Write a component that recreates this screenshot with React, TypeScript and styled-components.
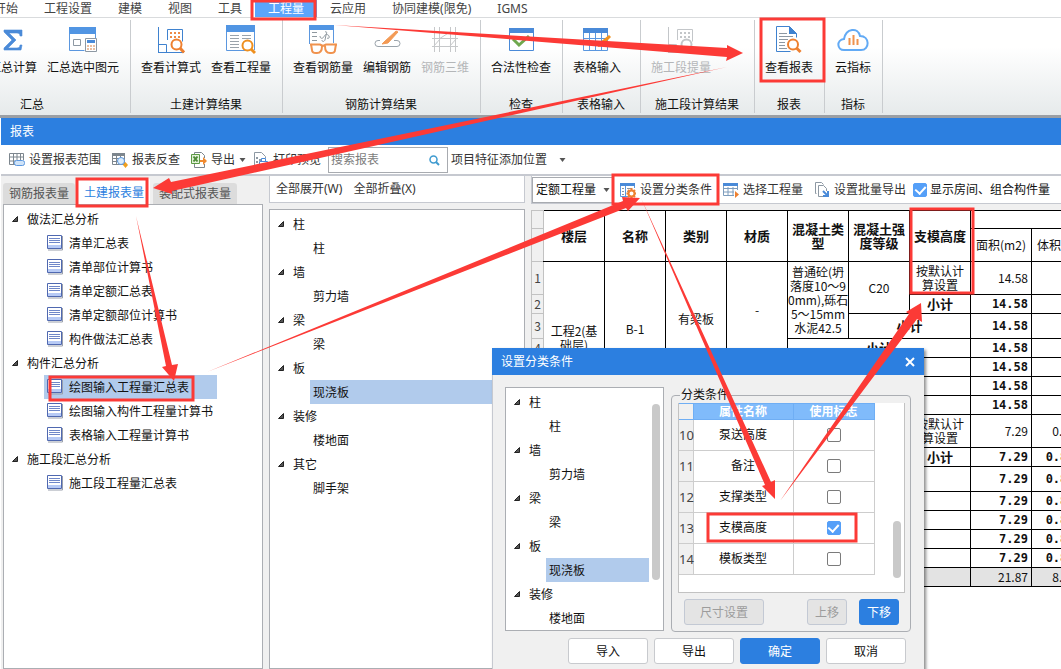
import React from "react";
import styled, { createGlobalStyle, css } from "styled-components";

const BLUE = "#2c7fe0";
const RED = "#fc3a36";

const GlobalStyle = createGlobalStyle`
  * { box-sizing: border-box; }
  body {
    margin: 0;
    overflow: hidden;
    background: #fff;
    color: #111;
    font: 12px/16px "Noto Sans", "Noto Sans CJK SC", sans-serif;
  }
  button, input, select { font: inherit; color: inherit; margin: 0; }
  ul { list-style: none; margin: 0; padding: 0; }
`;

const Page = styled.div`
  position: relative;
  display: flex;
  flex-direction: column;
  min-height: 100vh;
  overflow: hidden;
  white-space: nowrap;
`;

/* ---------- Menu and ribbon ---------- */

const Menu = styled.nav`
  display: flex;
  height: 18px;
  margin-left: -19px;
  border-bottom: 1px solid #d9dbdd;
`;

const MenuItem = styled.button<{ $active?: boolean }>`
  height: 17px;
  padding: 0 13px;
  border: 0;
  background: ${(p) => (p.$active ? "#5ba5fb" : "transparent")};
  color: ${(p) => (p.$active ? "#fff" : "#444")};
`;

const Ribbon = styled.div`
  display: flex;
  height: 100px;
  padding-top: 2px;
  border-bottom: 3px solid #9b9fa4;
  background: linear-gradient(#fff 30%, #e6eaeb);
`;

const Group = styled.section<{ $width: number; $cut?: boolean }>`
  display: flex;
  flex: none;
  flex-direction: column;
  justify-content: space-between;
  width: ${(p) => p.$width}px;
  height: 93px;
  padding: 4px 6px 0 5px;
  border-right: 1px solid #c9cccf;
  ${(p) =>
    p.$cut &&
    css`
      margin-left: -65px;
      align-items: flex-end;
    `}
`;

const GroupButtons = styled.div`
  display: flex;
`;

const GroupName = styled.div`
  align-self: stretch;
  text-align: center;
`;

const RibbonButton = styled.button`
  display: flex;
  flex-direction: column;
  align-items: center;
  gap: 4px;
  padding: 0 5px;
  border: 0;
  background: none;
  color: #111;
  &:disabled { color: #b4b6b8; }
  svg { display: block; }
`;

/* ---------- Report window ---------- */

const Report = styled.main`
  display: flex;
  flex: 1;
  flex-direction: column;
  margin-left: 1px;
  background: #f0f0f0;
`;

const TitleBar = styled.header`
  display: flex;
  align-items: center;
  justify-content: space-between;
  height: 27px;
  padding: 1px 9px 0;
  background: ${BLUE};
  color: #fff;
`;

const Toolbar = styled.div`
  display: flex;
  align-items: center;
  gap: 3px;
  height: 31px;
  padding: 1px 4px 0;
  border-bottom: 2px solid #c6c9d0;
  background: #fff;
`;

const ToolButton = styled.button<{ $menu?: boolean }>`
  display: flex;
  flex: none;
  align-items: center;
  gap: 4px;
  height: 22px;
  padding: 0 ${(p) => (p.$menu ? 0 : 4)}px 0 4px;
  border: 0;
  background: none;
  color: #333;
`;

const SearchBox = styled.label`
  display: flex;
  align-items: center;
  width: 120px;
  height: 26px;
  padding: 0 7px 0 2px;
  border: 1px solid #a8abb0;
  input {
    flex: 1;
    min-width: 0;
    padding: 0;
    border: 0;
    outline: 0;
    background: none;
  }
  input::placeholder { color: #7c7c7c; opacity: 1; }
`;

const FeatureButton = styled(ToolButton)`
  gap: 12px;
  padding: 0;
`;

const Columns = styled.div`
  display: flex;
  flex: 1;
  gap: 6px;
  padding-left: 2px;
`;

const Column = styled.section<{ $width?: number }>`
  display: flex;
  flex-direction: column;
  ${(p) => (p.$width ? `flex: none; width: ${p.$width}px;` : "flex: 1; min-width: 0;")}
`;

const Tabs = styled.div`
  display: flex;
  align-items: flex-end;
  gap: 3px;
  height: 28px;
`;

const Tab = styled.button<{ $active?: boolean }>`
  height: ${(p) => (p.$active ? 26 : 21)}px;
  padding: ${(p) => (p.$active ? 4 : 1)}px 6px 0;
  border: 0;
  border-radius: 3px 3px 0 0;
  background: ${(p) => (p.$active ? "#fff" : "#dcdcdc")};
  color: ${(p) => (p.$active ? BLUE : "#555")};
`;

const TreeBox = styled.div`
  position: relative;
  flex: 1;
  padding-top: 2px;
  border: 1px solid #abaeb3;
  background: #fff;
`;

const ReportTree = styled(TreeBox)`
  padding-right: 45px;
`;

const Branch = styled.div`
  display: flex;
  align-items: center;
  gap: 9px;
  height: 24px;
  padding-left: 7px;
`;

const Leaf = styled.li<{ $selected?: boolean }>`
  display: flex;
  align-items: center;
  gap: 6px;
  height: 24px;
  margin-left: 40px;
  padding-left: 3px;
  background: ${(p) => (p.$selected ? "#b1cbec" : "transparent")};
`;

const NodeName = styled.span`
  padding-top: 2px;
`;

const PanelBar = styled.div<{ $height: number }>`
  display: flex;
  align-items: center;
  gap: 3px;
  height: ${(p) => p.$height}px;
  margin-bottom: 6px;
  padding: 0 2px;
  border: 1px solid #c6c9d0;
  border-top: 0;
  background: #fff;
`;

const GridBar = styled(PanelBar)`
  padding: 1px 0 0;
  border-right: 0;
`;

const QuantitySelect = styled.label`
  position: relative;
  display: flex;
  align-items: center;
  width: 81px;
  height: 26px;
  select {
    width: 100%;
    height: 100%;
    padding: 0 0 0 3px;
    border: 1px solid #a8abb0;
    border-right: 0;
    appearance: none;
    background: #fff;
  }
  svg { position: absolute; right: 3px; }
`;

const CheckInput = styled.input.attrs({ type: "checkbox" })`
  display: grid;
  flex: none;
  place-content: center;
  width: 14px;
  height: 14px;
  border: 1px solid #7b7b7b;
  border-radius: 2px;
  appearance: none;
  background: #fff;
  &:checked { border-color: #559ff8; background: #559ff8; }
  &:checked::after {
    content: "";
    width: 5px;
    height: 8px;
    margin-bottom: 2px;
    border: solid #fff;
    border-width: 0 2px 2px 0;
    transform: rotate(42deg);
  }
`;

const CheckLabel = styled.label`
  display: flex;
  align-items: center;
  gap: 3px;
`;

/* ---------- Quantity table ---------- */

const Sheet = styled.div`
  flex: 1;
  overflow: hidden;
  background: #fff;
`;

const QuantityTable = styled.table`
  width: 622px;
  table-layout: fixed;
  border-collapse: collapse;
  line-height: 14px;
  font-family: "Noto Sans CJK SC", sans-serif;
  th, td { padding: 0; border: 1px solid #000; text-align: center; }
  thead th { font-size: 13px; }
`;

const Line = styled.tr<{ $height: number; $total?: boolean }>`
  height: ${(p) => p.$height}px;
  background: ${(p) => (p.$total ? "#e3e3e3" : "#fff")};
`;

const RowNo = styled.th`
  && {
    border-color: #c2c2c2;
    background: #f0f0f0;
    color: #444;
    font-size: 12px;
    font-weight: 400;
  }
  && + [rowspan="2"], && + [rowspan="7"] { border-left-color: #c2c2c2; }
`;

const UnitHead = styled.th`
  && { font-size: 12px; font-weight: 400; }
`;

const Value = styled.td<{ $bold?: boolean }>`
  && {
    padding-right: 3px;
    text-align: right;
    font-family: ${(p) => (p.$bold ? '"DejaVu Sans Mono", monospace' : '"Noto Sans CJK SC", sans-serif')};
    font-weight: ${(p) => (p.$bold ? 700 : 400)};
  }
`;

const Subtotal = styled.td`
  font-size: 13px;
  font-weight: 700;
`;

/* ---------- Dialog ---------- */

const Dialog = styled.section`
  position: absolute;
  top: 348px;
  left: 492px;
  width: 432px;
  background: #f0f0f0;
  box-shadow: 2px 2px 3px rgba(0, 0, 0, 0.45);
`;

const CloseButton = styled.button`
  padding: 0;
  border: 0;
  background: none;
  line-height: 0;
`;

const DialogBody = styled.div`
  display: flex;
  gap: 7px;
  padding: 12px 13px 6px 12px;
  border-left: 1px solid #c6c9d0;
`;

const DialogTree = styled(TreeBox)`
  flex: none;
  width: 159px;
  height: 244px;
  padding-right: 14px;
  overflow: hidden;
`;

const Thumb = styled.div<{ $top: number; $height: number; $right: number }>`
  position: absolute;
  top: ${(p) => p.$top}px;
  right: ${(p) => p.$right}px;
  width: 8px;
  height: ${(p) => p.$height}px;
  border-radius: 4px;
  background: #c9c9c9;
`;

const Conditions = styled.fieldset`
  flex: 1;
  min-width: 0;
  margin: 0;
  padding: 0 5px 6px 6px;
  border: 1px solid #abaeb3;
  border-radius: 4px;
  legend { margin-left: 2px; padding: 0 1px; }
`;

const ListBox = styled.div`
  position: relative;
  height: 190px;
  margin-bottom: 6px;
  border: 1px solid #c2c2c2;
  border-top: 0;
  background: #fff;
`;

const ConditionTable = styled.table`
  width: 195px;
  table-layout: fixed;
  border-collapse: collapse;
  th, td { padding: 0; border: 1px solid #cdcdcd; text-align: center; }
  tr > :first-child { border-left: 0; }
  thead th { height: 16px; background: #80bbfb; color: #fff; line-height: 14px; border-color: #6faef4; }
  thead th:first-child { background: #f0f0f0; }
  tbody tr { height: 31px; }
  tbody th { background: #f0f0f0; color: #444; font-size: 13px; font-weight: 400; }
  input { margin: 0 auto; }
`;

const ButtonRow = styled.div`
  display: flex;
  gap: 12px;
  padding: 0 6px;
  & > :first-child { margin-right: auto; }
`;

const DialogFooter = styled.footer`
  display: flex;
  justify-content: flex-end;
  gap: 6px;
  padding: 0 18px 8px 0;
  border-left: 1px solid #c6c9d0;
`;

const PushButton = styled.button<{ $primary?: boolean; $small?: boolean }>`
  width: ${(p) => (p.$small ? 40 : 80)}px;
  height: 26px;
  padding: 1px 0 0;
  border: 1px solid ${(p) => (p.$primary ? BLUE : "#c8cace")};
  border-radius: 3px;
  background: ${(p) => (p.$primary ? BLUE : "#fff")};
  color: ${(p) => (p.$primary ? "#fff" : "#111")};
  &:disabled { border-color: #c3c9d4; background: #e4e4e4; color: #9c9c9c; }
`;

const Markup = styled.svg`
  position: absolute;
  inset: 0;
  pointer-events: none;
`;

/* ---------- Icons ---------- */

type Kids = { children: React.ReactNode };
const Big = ({ children }: Kids) => (
  <svg width="32" height="32" viewBox="0 0 32 32" fill="none" aria-hidden="true">{children}</svg>
);
const Small = ({ children }: Kids) => (
  <svg width="16" height="16" viewBox="0 0 16 16" fill="none" aria-hidden="true">{children}</svg>
);

const SumIcon = () => (
  <Big>
    <path d="M7 6h18v6h-2c0-2-1-3-3-3h-8l7 7-8 8h9c2 0 3-1 3-3h2l-1 5H7v-2l8-8-8-8z" fill="#4a8ad8" stroke="#4a8ad8" strokeWidth=".6" />
  </Big>
);
const SumSelectedIcon = () => (
  <Big>
    <path d="M2.500 9v17.500h15M28.500 9v5" stroke="#5b97df" />
    <path d="M2 3h27v7H2z" fill="#5195e3" />
    <path d="M6.500 15.500h7v6h-7z" stroke="#8d98a3" />
    <path d="M18.500 14.500h11v13h-11z" fill="#fff" stroke="#8d98a3" />
    <path d="M20 16h8v3h-8z" fill="#4a8ad8" />
    <path d="M20 22h2m1 0h2m1 0h2M20 25h2m1 0h2m1 0h2" stroke="#d98045" />
  </Big>
);
const FormulaShape = ({ line, dots, lens }: { line: string; dots: string; lens: string }) => (
  <>
    <path d="M3.500 3v26M3 28.500h26M3.500 20.500h8v8M12.500 16V5.500h15v12" stroke={line} />
    <path d="M15 8h2v2h-2zm4 0h2v2h-2zm4 0h2v2h-2zm-8 4h2v2h-2zm4 0h2v2h-2zm4 0h2v2h-2z" fill={dots} />
    <circle cx="21.500" cy="20.500" r="5" fill="#fff" stroke={lens} strokeWidth="2" />
    <path d="M25 24l4 4.500" stroke={lens} strokeWidth="3" />
  </>
);
const FormulaIcon = () => <Big><FormulaShape line="#3f82cf" dots="#ee8a45" lens="#ee8030" /></Big>;
const SegmentIcon = () => <Big><FormulaShape line="#c3c6c9" dots="#c3c6c9" lens="#c3c6c9" /></Big>;
const QuantityIcon = () => (
  <Big>
    <path d="M1.500 8v18.500h20M29.500 8v18" stroke="#5b97df" />
    <path d="M1 1h29v7H1z" fill="#5195e3" />
    <path d="M5 11.500h9m3 0h9M5 14.500h9m3 0h9M5 17.500h9M5 20.500h9M5 23.500h9" stroke="#9aa3ab" />
    <circle cx="22.500" cy="21.500" r="5" fill="#fff" stroke="#ee8f1e" strokeWidth="2" />
    <path d="M26 25l4 4" stroke="#ee8f1e" strokeWidth="3" />
  </Big>
);
const RebarViewIcon = () => (
  <Big>
    <path d="M2.500 6v14M26.500 6v13" stroke="#5b97df" />
    <path d="M2 1h25v5H2z" fill="#5195e3" />
    <path d="M5 8.500h5M5 12.500h5M5 16.500h5" stroke="#8f989f" />
    <path d="M13 12c0 3 3 3 4 .5S21 10 22 12s-1 3-2 2M18 8c2-1 2 1 1 3l-1 5c-1 2-3 2-3 0" stroke="#8f989f" />
    <path d="M3 20.500h10l3 1.500 3-1.500h11" stroke="#f0924d" strokeWidth="2" />
    <path d="M4 20l1 6c0 2 2 3 4 3h1c3 0 5-2 5-7M29 20l-1 6c0 2-2 3-4 3h-1c-3 0-5-2-5-7" stroke="#f0924d" strokeWidth="2" />
  </Big>
);
const RebarEditIcon = () => (
  <Big>
    <path d="M9 16.500H7a3 3 0 0 0 0 6h19a3 3 0 0 0 0-6h-3" stroke="#9aa3ab" />
    <path d="M13 18l12-11 2 1-10 11-6 1z" fill="#f39a55" stroke="#f39a55" />
  </Big>
);
const Rebar3dIcon = () => (
  <Big>
    <path d="M3 8.500h26M3 14.500h26M3 22.500h26M5.500 3v25M10.500 3v25M21.500 3v25M26.500 3v25M5 22l6-7M10 15l11-7M21 22l6-7" stroke="#c6c8ca" />
  </Big>
);
const CheckIcon = () => (
  <Big>
    <path d="M4.500 8.500h24v18h-24z" stroke="#4a8ad8" />
    <path d="M4 4h25v5H4z" fill="#4a8ad8" />
    <path d="M8 15l6 6 10-9" stroke="#6fa84d" strokeWidth="3" />
  </Big>
);
const TableInputIcon = () => (
  <Big>
    <path d="M2.500 8.500h24v18h-24zM2 14.500h25M2 20.500h25M8.500 9v18M14.500 9v18M20.500 9v18" stroke="#5b97df" />
    <path d="M2 4h25v5H2z" fill="#4a8ad8" />
    <path d="M17 23l1-4 10-8 2 2-9 9z" fill="#f0921e" />
  </Big>
);
const ReportIcon = () => (
  <Big>
    <path d="M3.500 2.500h13l7 7v4M3.500 2.500v25h14" stroke="#3f82cf" />
    <path d="M16 2l8 8h-8z" fill="#3f82cf" />
    <path d="M6 9.500h8M6 12.500h14M6 15.500h9M6 18.500h6M6 21.500h6M6 24.500h8" stroke="#8d98a3" />
    <circle cx="20" cy="20.500" r="5" fill="#fff" stroke="#ee8030" strokeWidth="2" />
    <path d="M23.500 24l4 4" stroke="#ee8030" strokeWidth="3" />
  </Big>
);
const CloudIcon = () => (
  <Big>
    <path d="M7 26c-7 0-8-10 0-11C9 4 21 3 23 12c10 0 10 14 1 14z" stroke="#62aaf5" strokeWidth="2" />
    <path d="M12.500 14v7M16.500 11v10M20.500 15v6" stroke="#f0924d" strokeWidth="2" />
  </Big>
);

const RangeIcon = () => (
  <Small>
    <path d="M.5 1.500h14v11H.5zM0 5h15M0 9h8M4.500 2v10M8 2v7M11.500 2v6" stroke="#7d868e" />
    <path d="M7 8h8v6H7z" fill="#fff" />
    <rect x="5.500" y="8.500" width="10" height="5" rx="2" fill="#cfe3f8" stroke="#5b97df" />
  </Small>
);
const LookupIcon = () => (
  <Small>
    <path d="M.5 3.500h12v9H.5zM0 6.500h12M0 9.500h6M4.500 3v9M8.500 3v3" stroke="#7d868e" />
    <path d="M0 1h13v3H0z" fill="#7d868e" />
    <circle cx="9" cy="9" r="3.500" fill="#dcecfb" stroke="#5b97df" />
    <path d="M13.500 10l2.500 3-2.500 3-2.500-3z" fill="#f0a01e" />
  </Small>
);
const ExportIcon = () => (
  <Small>
    <path d="M3.500 3V.5h7l3 3V6M3.500 12v3.500h10V12" stroke="#7d868e" />
    <path d="M.5 2.500h8v9h-8z" fill="#e3f2da" stroke="#5c9a45" />
    <path d="M2.500 4.500l4 5m0-5l-4 5" stroke="#4d8a38" strokeWidth="2" />
    <path d="M9 8h3V5l4 4-4 4v-3H9z" fill="#f08a30" />
  </Small>
);
const PreviewIcon = () => (
  <Small>
    <path d="M1.500 15V.5h7l4 4V6M1 14.500h4" stroke="#8d98a3" />
    <path d="M3 5h2v2H3zm3 2h2v2H6zM3 9h2v2H3z" fill="#8d98a3" />
    <path d="M8.500 6.500h4v3h-4zM6.500 9.500h8v4h-8z" fill="#fff" stroke="#4a8ad8" />
  </Small>
);
const ClassifyIcon = () => (
  <Small>
    <path d="M.5 3v11.500H8M5.500 4v10M14.500 3v3" stroke="#5b97df" />
    <path d="M0 1h15v3H0z" fill="#4a8ad8" />
    <path d="M2 6.500h2M2 9.500h2M2 12.500h2M7 6.500h4M7 9.500h1" stroke="#8d98a3" />
    <circle cx="11.500" cy="11.500" r="3" fill="#fff" stroke="#ee8030" strokeWidth="2" />
    <path d="M11.500 6v2m0 7v1M6.500 11.500h2m6 0h2M8 8l1 1m5 5l1 1M8 15l1-1m5-5l1-1" stroke="#ee8030" strokeWidth="2" />
  </Small>
);
const PickIcon = () => (
  <Small>
    <path d="M.5 2.500h14v11H.5zM0 6.500h15M0 10h12M5 5v9M10 5v9" stroke="#7d9cbd" />
    <path d="M0 1h15v3H0z" fill="#4a8ad8" />
    <path d="M11 8h5v7h-5z" fill="#fff" />
    <path d="M12 9l4 3.500-4 3.500z" fill="#ee8030" />
  </Small>
);
const BatchIcon = () => (
  <Small>
    <path d="M2.500 11.500h-1V.5h6l2 2" stroke="#8d98a3" />
    <path d="M9 14.500H4.500v-11h5l3 3V9" stroke="#8d98a3" />
    <path d="M9 9l4 4m1-4v5H9" stroke="#4a8ad8" strokeWidth="2" />
  </Small>
);
const SheetIcon = () => (
  <Small>
    <path d="M1 15h14.500V1" stroke="#9aa0ac" />
    <path d="M.5.500h14v13H.5z" fill="#fff" stroke="#4f68b0" />
    <path d="M1 10h13v3H1z" fill="#b7caf5" />
    <path d="M2 3.500h11M2 5.500h11M2 7.500h11" stroke="#6f87c8" />
  </Small>
);
const Caret = () => (
  <svg width="7" height="4" viewBox="0 0 7 4" aria-hidden="true"><path d="M.5 0h6l-3 4z" fill="#555" /></svg>
);
const Expanded = () => (
  <svg width="7" height="7" viewBox="0 0 7 7" aria-hidden="true"><path d="M6.500.5v5h-5z" fill="#555" stroke="#222" /></svg>
);
const SearchIcon = () => (
  <svg width="11" height="11" viewBox="0 0 11 11" fill="none" stroke="#3f9bd0" aria-hidden="true">
    <circle cx="4.500" cy="4.500" r="3.500" strokeWidth="1.500" />
    <path d="M7 7l3 3" strokeWidth="2" />
  </svg>
);
const CloseIcon = () => (
  <svg width="10" height="10" viewBox="0 0 10 10" stroke="#fff" strokeWidth="2" aria-hidden="true"><path d="M1 1l8 8M9 1L1 9" /></svg>
);

/* ---------- Data ---------- */

const menu = ["开始", "工程设置", "建模", "视图", "工具", "工程量", "云应用", "协同建模(限免)", "IGMS"];

type RibbonItem = { text: string; icon: React.ReactNode; disabled?: boolean };
const ribbon: { name: string; width: number; items: RibbonItem[] }[] = [
  { name: "汇总", width: 196, items: [{ text: "汇总计算", icon: <SumIcon /> }, { text: "汇总选中图元", icon: <SumSelectedIcon /> }] },
  { name: "土建计算结果", width: 152, items: [{ text: "查看计算式", icon: <FormulaIcon /> }, { text: "查看工程量", icon: <QuantityIcon /> }] },
  {
    name: "钢筋计算结果",
    width: 198,
    items: [
      { text: "查看钢筋量", icon: <RebarViewIcon /> },
      { text: "编辑钢筋", icon: <RebarEditIcon /> },
      { text: "钢筋三维", icon: <Rebar3dIcon />, disabled: true },
    ],
  },
  { name: "检查", width: 82, items: [{ text: "合法性检查", icon: <CheckIcon /> }] },
  { name: "表格输入", width: 78, items: [{ text: "表格输入", icon: <TableInputIcon /> }] },
  { name: "施工段计算结果", width: 114, items: [{ text: "施工段提量", icon: <SegmentIcon />, disabled: true }] },
  { name: "报表", width: 70, items: [{ text: "查看报表", icon: <ReportIcon /> }] },
  { name: "指标", width: 58, items: [{ text: "云指标", icon: <CloudIcon /> }] },
];

type Node = { name: string; leaves: string[] };
const reports: Node[] = [
  { name: "做法汇总分析", leaves: ["清单汇总表", "清单部位计算书", "清单定额汇总表", "清单定额部位计算书", "构件做法汇总表"] },
  { name: "构件汇总分析", leaves: ["绘图输入工程量汇总表", "绘图输入构件工程量计算书", "表格输入工程量计算书"] },
  { name: "施工段汇总分析", leaves: ["施工段工程量汇总表"] },
];
const components: Node[] = [
  { name: "柱", leaves: ["柱"] },
  { name: "墙", leaves: ["剪力墙"] },
  { name: "梁", leaves: ["梁"] },
  { name: "板", leaves: ["现浇板"] },
  { name: "装修", leaves: ["楼地面"] },
  { name: "其它", leaves: ["脚手架"] },
];

const conditions = [
  { no: 10, name: "泵送高度" },
  { no: 11, name: "备注" },
  { no: 12, name: "支撑类型" },
  { no: 13, name: "支模高度", used: true },
  { no: 14, name: "模板类型" },
];

const rowHeights = [33, 19, 25, 19, 19, 19, 19];

const Tree = ({ nodes, selected, icon }: { nodes: Node[]; selected: string; icon?: boolean }) => (
  <ul>
    {nodes.map((n) => (
      <li key={n.name}>
        <Branch><Expanded /><NodeName>{n.name}</NodeName></Branch>
        <ul>
          {n.leaves.map((leaf) => (
            <Leaf key={leaf} $selected={leaf === selected}>
              {icon && <SheetIcon />}
              <NodeName>{leaf}</NodeName>
            </Leaf>
          ))}
        </ul>
      </li>
    ))}
  </ul>
);

const FloorRows = ({ start, area, volume }: { start: number; area: string; volume: string }) => (
  <>
    {rowHeights.map((h, i) => (
      <Line key={i} $height={h}>
        <RowNo scope="row">{start + i}</RowNo>
        {i === 0 && (
          <>
            <td rowSpan={7}>工程2(基<br />础层)</td>
            <td rowSpan={6}>B-1</td>
            <td rowSpan={5}>有梁板</td>
            <td rowSpan={4}>-</td>
            <td rowSpan={3}>普通砼(坍<br />落度10～9<br />0mm),砾石<br />5～15mm<br />水泥42.5</td>
            <td rowSpan={2}>C20</td>
            <td>按默认计<br />算设置</td>
          </>
        )}
        {i > 0 && <Subtotal colSpan={i}>小计</Subtotal>}
        <Value $bold={i > 0}>{area}</Value>
        <Value $bold={i > 0}>{volume}</Value>
      </Line>
    ))}
  </>
);

const boxes = [
  [252, 1, 63, 18],
  [761, 19, 63, 62],
  [77, 179, 70, 27],
  [613, 175, 105, 29],
  [911, 209, 62, 84],
  [50, 377, 143, 23],
  [708, 514, 148, 27],
];
const arrows = [
  "334,25 727,48 727,45 743,53 726,61 727,57",
  "727,67 171,182 169,178 153,188 172,194 172,191",
  "136,216 172,365 178,364 174,381 162,367 166,366",
  "207,372 623,201 622,197 640,198 628,211 626,208",
  "641,198 771,482 775,480 775,499 762,486 765,485",
  "780,501 909,314 906,312 921,303 922,322 917,319",
];

export default function App() {
  return (
    <Page>
      <GlobalStyle />
      <Menu>
        {menu.map((m) => <MenuItem key={m} $active={m === "工程量"}>{m}</MenuItem>)}
      </Menu>
      <Ribbon>
        {ribbon.map((g, i) => (
          <Group key={g.name} $width={g.width} $cut={i === 0}>
            <GroupButtons>
              {g.items.map((item) => (
                <RibbonButton key={item.text} disabled={item.disabled}>{item.icon}{item.text}</RibbonButton>
              ))}
            </GroupButtons>
            <GroupName>{g.name}</GroupName>
          </Group>
        ))}
      </Ribbon>

      <Report>
        <TitleBar>报表</TitleBar>
        <Toolbar>
          <ToolButton><RangeIcon />设置报表范围</ToolButton>
          <ToolButton><LookupIcon />报表反查</ToolButton>
          <ToolButton $menu><ExportIcon />导出<Caret /></ToolButton>
          <ToolButton><PreviewIcon />打印预览</ToolButton>
          <SearchBox>
            <input type="text" placeholder="搜索报表" aria-label="搜索报表" />
            <SearchIcon />
          </SearchBox>
          <FeatureButton>项目特征添加位置<Caret /></FeatureButton>
        </Toolbar>

        <Columns>
          <Column $width={260}>
            <Tabs>
              <Tab>钢筋报表量</Tab>
              <Tab $active>土建报表量</Tab>
              <Tab>装配式报表量</Tab>
            </Tabs>
            <ReportTree><Tree nodes={reports} selected="绘图输入工程量汇总表" icon /></ReportTree>
          </Column>

          <Column $width={256}>
            <PanelBar $height={27}>
              <ToolButton>全部展开(W)</ToolButton>
              <ToolButton>全部折叠(X)</ToolButton>
            </PanelBar>
            <TreeBox><Tree nodes={components} selected="现浇板" /></TreeBox>
          </Column>

          <Column>
            <GridBar $height={28}>
              <QuantitySelect>
                <select aria-label="工程量类型"><option>定额工程量</option></select>
                <Caret />
              </QuantitySelect>
              <ToolButton><ClassifyIcon />设置分类条件</ToolButton>
              <ToolButton><PickIcon />选择工程量</ToolButton>
              <ToolButton><BatchIcon />设置批量导出</ToolButton>
              <CheckLabel><CheckInput defaultChecked />显示房间、组合构件量</CheckLabel>
            </GridBar>
            <Sheet>
              <QuantityTable>
                <colgroup>
                  <col width="12" />
                  {Array.from({ length: 10 }, (_, i) => <col key={i} width="61" />)}
                </colgroup>
                <thead>
                  <Line $height={18}>
                    <RowNo />
                    <th rowSpan={2}>楼层</th>
                    <th rowSpan={2}>名称</th>
                    <th rowSpan={2}>类别</th>
                    <th rowSpan={2}>材质</th>
                    <th rowSpan={2}>混凝土类<br />型</th>
                    <th rowSpan={2}>混凝土强<br />度等级</th>
                    <th rowSpan={2}>支模高度</th>
                    <th colSpan={3} />
                  </Line>
                  <Line $height={33}>
                    <RowNo />
                    <UnitHead>面积(m2)</UnitHead>
                    <UnitHead>体积(m3)</UnitHead>
                  </Line>
                </thead>
                <tbody>
                  <FloorRows start={1} area="14.58" volume="" />
                  <FloorRows start={8} area="7.29" volume="0.8748" />
                  <Line $height={19} $total>
                    <RowNo scope="row">15</RowNo>
                    <td colSpan={7}>合计</td>
                    <Value>21.87</Value>
                    <Value>8.7480</Value>
                  </Line>
                </tbody>
              </QuantityTable>
            </Sheet>
          </Column>
        </Columns>
      </Report>

      <Dialog role="dialog" aria-label="设置分类条件">
        <TitleBar>
          设置分类条件
          <CloseButton aria-label="关闭"><CloseIcon /></CloseButton>
        </TitleBar>
        <DialogBody>
          <DialogTree>
            <Tree nodes={components.slice(0, 5)} selected="现浇板" />
            <Thumb $top={16} $height={176} $right={3} />
          </DialogTree>
          <Conditions>
            <legend>分类条件</legend>
            <ListBox>
              <ConditionTable>
                <colgroup><col width="14" /><col width="100" /><col width="81" /></colgroup>
                <thead>
                  <tr><th /><th>属性名称</th><th>使用标志</th></tr>
                </thead>
                <tbody>
                  {conditions.map((c) => (
                    <tr key={c.no}>
                      <th scope="row">{c.no}</th>
                      <td>{c.name}</td>
                      <td><CheckInput aria-label={c.name} defaultChecked={c.used} /></td>
                    </tr>
                  ))}
                </tbody>
              </ConditionTable>
              <Thumb $top={118} $height={57} $right={3} />
            </ListBox>
            <ButtonRow>
              <PushButton disabled>尺寸设置</PushButton>
              <PushButton $small disabled>上移</PushButton>
              <PushButton $small $primary>下移</PushButton>
            </ButtonRow>
          </Conditions>
        </DialogBody>
        <DialogFooter>
          <PushButton>导入</PushButton>
          <PushButton>导出</PushButton>
          <PushButton $primary>确定</PushButton>
          <PushButton>取消</PushButton>
        </DialogFooter>
      </Dialog>

      <Markup width="100%" height="100%" aria-hidden="true">
        {boxes.map(([x, y, w, h]) => (
          <rect key={`${x}-${y}`} x={x} y={y} width={w} height={h} fill="none" stroke={RED} strokeWidth="3" />
        ))}
        {arrows.map((points) => <polygon key={points} points={points} fill={RED} />)}
      </Markup>
    </Page>
  );
}
